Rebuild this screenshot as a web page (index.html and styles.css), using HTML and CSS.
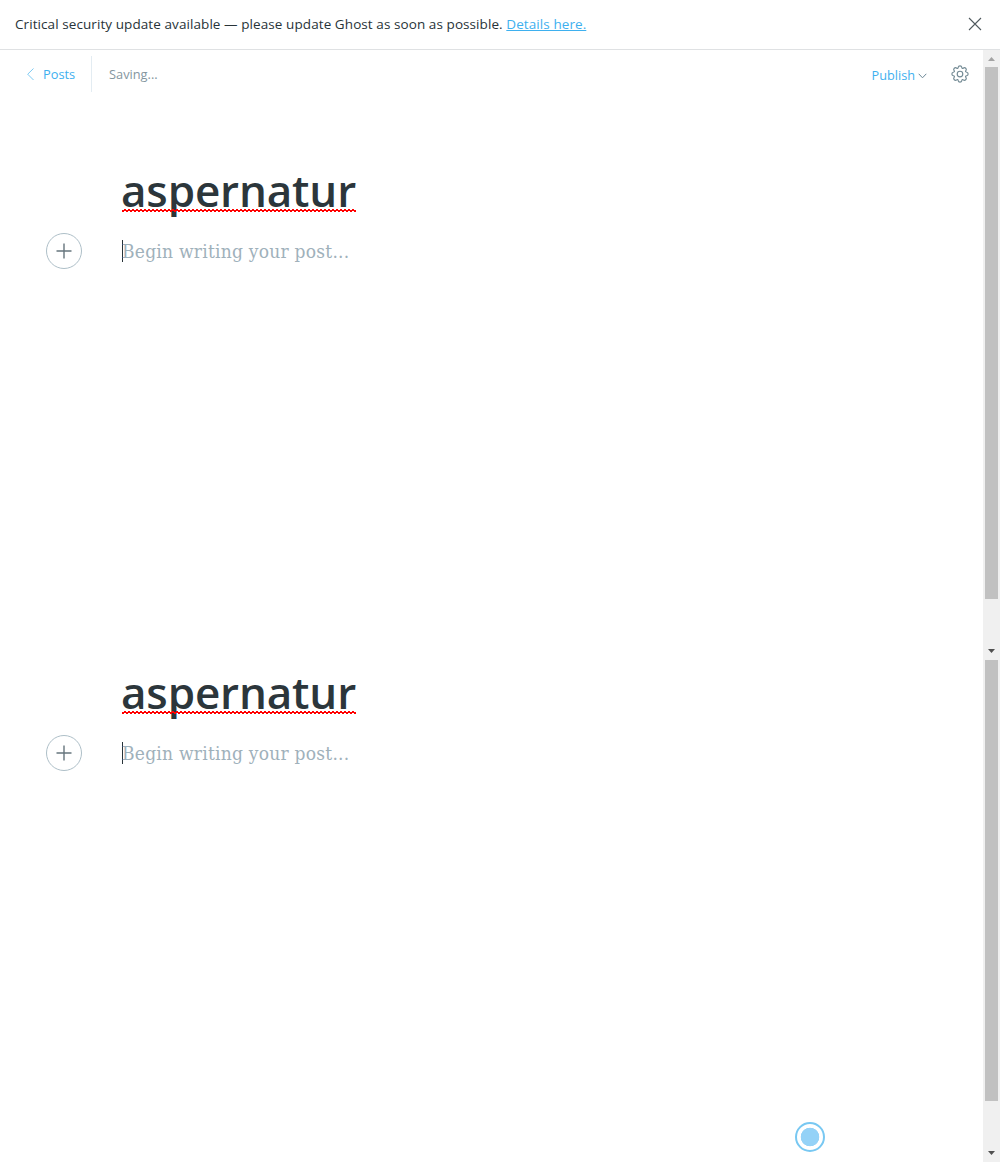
FILE: index.html
```html
<!DOCTYPE html>
<html lang="en">
<head>
<meta charset="utf-8">
<title>Editor</title>
<link rel="stylesheet" href="styles.css">
</head>
<body>
<header class="alert">
  <p class="alert-text"><span class="message">Critical security update available — please update Ghost as soon as possible.</span> <a class="details" href="#">Details here.</a></p>
  <svg class="close" width="14" height="14" viewBox="0 0 14 14"><path d="M1 1l12 12M13 1L1 13"/></svg>
</header>
<div class="workspace">
  <main class="content">
    <nav class="toolbar">
      <a class="back" href="#"><svg width="8" height="14" viewBox="0 0 8 14"><path d="M7.5 1.5L1.7 7.2L7.5 13"/></svg><span class="back-label">Posts</span></a>
      <span class="status">Saving...</span>
      <a class="publish" href="#"><span class="publish-label">Publish</span><svg width="9" height="6" viewBox="0 0 9 6"><path d="M.7 .8L4.5 4.8L8.3 .8"/></svg></a>
      <svg class="gear" width="18" height="18" viewBox="0 0 18 18"><path d="M7.2 2.3C7.5 .4 10.5 .4 10.8 2.3C11 3.6 11.6 3.8 12.5 3C14 1.9 16.1 4 15 5.5C14.2 6.4 14.4 7 15.7 7.2C17.6 7.5 17.6 10.5 15.7 10.8C14.4 11 14.2 11.6 15 12.5C16.1 14 14 16.1 12.5 15C11.6 14.2 11 14.4 10.8 15.7C10.5 17.6 7.5 17.6 7.2 15.7C7 14.4 6.4 14.2 5.5 15C4 16.1 1.9 14 3 12.5C3.8 11.6 3.6 11 2.3 10.8C.4 10.5 .4 7.5 2.3 7.2C3.6 7 3.8 6.4 3 5.5C1.9 4 4 1.9 5.5 3C6.4 3.8 7 3.6 7.2 2.3Z"/><circle cx="9" cy="9" r="2.8"/></svg>
    </nav>
    <section class="post">
      <h1 class="title"><span class="title-text">aspernatur</span><svg class="squiggle" width="234" height="3"><path class="crest" d="M2 .5H234"/><path d="M0 1.5H234"/><path class="crest" d="M0 2.5H234"/></svg></h1>
      <div class="writing"><button class="add" aria-label="Add"><svg width="16" height="16" viewBox="0 0 16 16"><path d="M8 .5v15M.5 8h15"/></svg></button><p class="placeholder"><span class="placeholder-text">Begin writing your post...</span></p></div>
    </section>
    <section class="post">
      <h1 class="title"><span class="title-text">aspernatur</span><svg class="squiggle" width="234" height="3"><path class="crest" d="M2 .5H234"/><path d="M0 1.5H234"/><path class="crest" d="M0 2.5H234"/></svg></h1>
      <div class="writing"><button class="add" aria-label="Add"><svg width="16" height="16" viewBox="0 0 16 16"><path d="M8 .5v15M.5 8h15"/></svg></button><p class="placeholder"><span class="placeholder-text">Begin writing your post...</span></p></div>
    </section>
    <span class="beacon"></span>
  </main>
  <aside class="scrollbars">
    <div class="track upper"><svg class="arrow up" width="7" height="4"><path d="M0 4L3.5 0L7 4z"/></svg><div class="thumb"></div><svg class="arrow" width="7" height="4"><path d="M0 0H7L3.5 4z"/></svg></div>
    <div class="track lower"><div class="thumb"></div><svg class="arrow" width="7" height="4"><path d="M0 0H7L3.5 4z"/></svg></div>
  </aside>
</div>
</body>
</html>
```
FILE: styles.css
```css
* { box-sizing: border-box; }
body { margin: 0; height: 1162px; overflow: hidden; background: #fff; color: #283338; font-family: "Open Sans", "Noto Sans", sans-serif; font-size: 13px; }
p, h1 { margin: 0; }
svg { display: block; fill: none; flex: none; }
.alert { display: flex; align-items: center; justify-content: space-between; height: 50px; padding: 0 18px 2px 15px; border-bottom: 1px solid #dfe1e3; }
.alert-text { font-size: 13.5px; line-height: 20px; letter-spacing: .08px; white-space: nowrap; }
.details { color: #3eb0ef; text-decoration: underline; }
.close { stroke: #50595e; stroke-width: 1.1; }
.workspace { display: flex; height: 1112px; }
.content { position: relative; width: 983px; }
.toolbar { display: flex; align-items: center; height: 48px; padding: 0 14px 0 26px; }
.back { display: flex; align-items: center; gap: 9px; width: 66px; height: 36px; margin-bottom: 1px; border-right: 1px solid #e3ecf2; color: #3eb0ef; font-size: 12.8px; text-decoration: none; }
.back svg { stroke: #7dcaf3; }
.status { margin-left: 17px; color: #8496a0; font-size: 12.8px; }
.publish { display: flex; align-items: center; gap: 3px; margin: 1px 24px 0 auto; color: #3eb0ef; font-size: 12.7px; text-decoration: none; }
.publish svg { stroke: #6b8796; margin-top: 2px; }
.gear { stroke: #738a94; stroke-width: 1.15; }
.post { height: 502px; padding-left: 46px; }
.title { position: relative; height: 135px; padding: 58px 0 0 75px; font-size: 44px; font-weight: 600; line-height: 68px; letter-spacing: -.15px; color: #2c363b; }
.squiggle { position: absolute; left: 76px; top: 111px; stroke: #f00; shape-rendering: crispEdges; }
.crest { stroke-dasharray: 2 2; }
.writing { display: flex; align-items: center; gap: 40px; height: 36px; }
.add { display: grid; place-items: center; width: 36px; height: 36px; padding: 0; border: 1px solid #aebfc8; border-radius: 50%; background: none; }
.add svg { stroke: #66757d; stroke-width: 1.4; }
.placeholder { border-left: 1px solid #283338; height: 22px; line-height: 23px; color: #9fb1bb; font-family: "DejaVu Serif Condensed", "DejaVu Serif", serif; font-size: 19px; letter-spacing: .24px; white-space: nowrap; }
.placeholder-text { margin-left: -1px; }
.beacon { position: absolute; left: 795px; top: 1072px; width: 30px; height: 30px; border: 2px solid #78c8f2; border-radius: 50%; background: radial-gradient(circle, #94d2f7 0 9px, transparent 9.6px); }
.scrollbars { width: 17px; background: #f0f0f0; }
.track { display: flex; flex-direction: column; align-items: center; }
.upper { height: 610px; padding-top: 7px; }
.lower { height: 502px; }
.thumb { width: 13px; background: #c1c1c1; }
.upper .thumb { height: 532px; margin-top: 6px; }
.lower .thumb { height: 441px; }
.arrow { margin-top: 50px; fill: #505050; }
.up { margin-top: 0; fill: #a3a3a3; }
```
